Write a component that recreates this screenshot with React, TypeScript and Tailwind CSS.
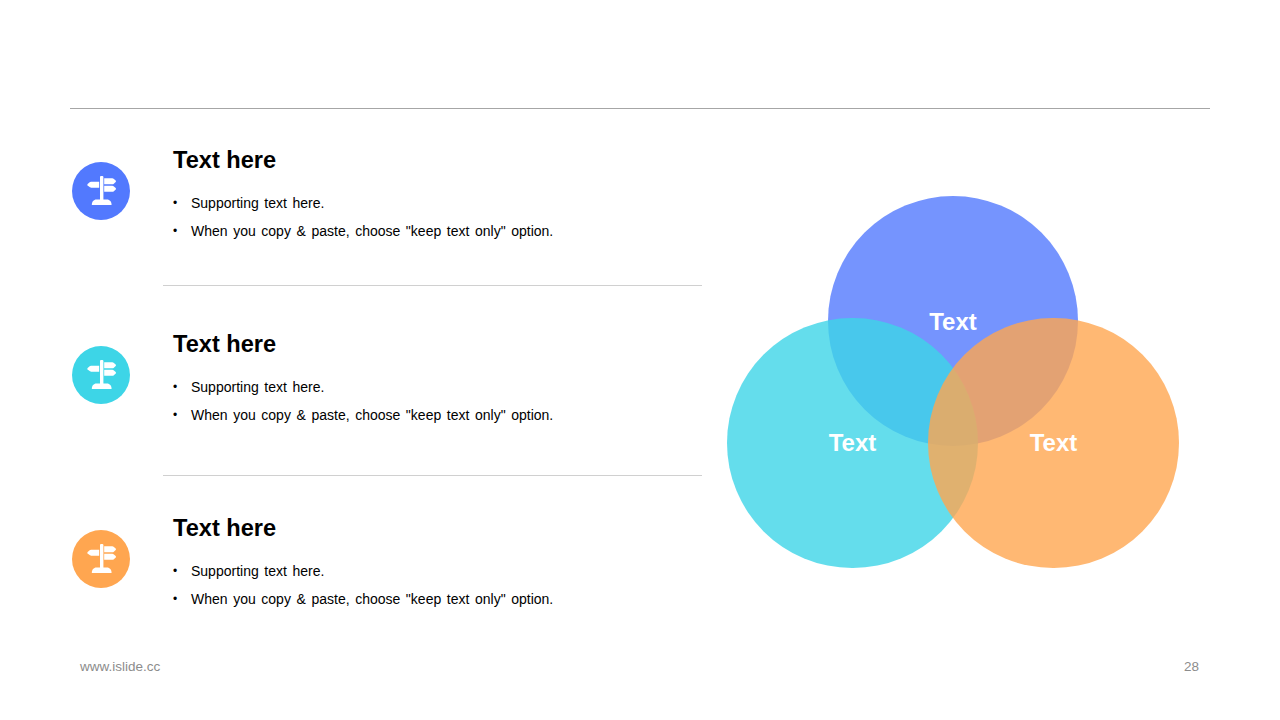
import React from "react";

function Sign() {
  return (
    <svg width="32" height="32" viewBox="0 0 32 32" fill="#ffffff" aria-hidden="true">
      <rect x="15" y="1" width="3.4" height="25" rx="1" />
      <path d="M14.2 6.7 H6.2 Q5.6 6.7 5 7.1 L2.6 9 Q2 9.7 2.6 10.4 L5 12.3 Q5.6 12.7 6.2 12.7 H14.2 Z" />
      <path d="M19.2 3.3 H27.4 Q28 3.3 28.6 3.7 L30.7 5.5 Q31.3 6.3 30.7 7.1 L28.6 8.9 Q28 9.3 27.4 9.3 H19.2 Z" />
      <path d="M19.2 10.8 H27.4 Q28 10.8 28.6 11.2 L30.7 13 Q31.3 13.8 30.7 14.6 L28.6 16.4 Q28 16.8 27.4 16.8 H19.2 Z" />
      <path d="M6.8 30 C6.8 27 8.6 24.6 11.5 24.6 H21.9 C24.8 24.6 26.6 27 26.6 30 Z" />
    </svg>
  );
}

function Row({ color, topClass }: { color: string; topClass: string }) {
  return (
    <div className={`flex items-start ${topClass}`}>
      <div className={`mt-[16px] ml-[2px] flex h-[58px] w-[58px] shrink-0 items-center justify-center rounded-full ${color}`}>
        <Sign />
      </div>
      <div className="ml-[43px]">
        <h2 className="text-[23.6px] leading-[28px] font-bold text-black">Text here</h2>
        <ul className="mt-[15px] text-[14px] leading-[28px] text-black [word-spacing:1.7px]">
          <li className="flex"><span className="w-[18px] text-[12px]">•</span>Supporting text here.</li>
          <li className="flex"><span className="w-[18px] text-[12px]">•</span>When you copy &amp; paste, choose "keep text only" option.</li>
        </ul>
      </div>
    </div>
  );
}

function Circle({ cls, label }: { cls: string; label: string }) {
  return (
    <div className={`absolute flex items-center justify-center rounded-full pt-[1px] ${cls}`}>
      <span className="text-[24px] font-bold text-white">{label}</span>
    </div>
  );
}

export default function App() {
  return (
    <div className="flex h-[720px] w-[1280px] flex-col bg-white px-[70px] pt-[108px] font-['Liberation_Sans',Arial,sans-serif]">
      <div className="h-px w-full bg-[#a6a6a6]" />
      <div className="flex flex-1">
        <div className="w-[632px]">
          <Row color="bg-[#5279fe]" topClass="mt-[37px]" />
          <div className="mt-[40px] ml-[93px] h-px w-[539px] bg-[#d0d0d0]" />
          <Row color="bg-[#3dd5e7]" topClass="mt-[44px]" />
          <div className="mt-[46px] ml-[93px] h-px w-[539px] bg-[#d0d0d0]" />
          <Row color="bg-[#ffa650]" topClass="mt-[38px]" />
        </div>
        <div className="relative flex-1">
          <Circle cls="left-[126px] top-[87px] h-[250px] w-[250px] bg-[#5279fe]/80" label="" />
          <Circle cls="left-[25px] top-[208.5px] h-[250.5px] w-[251px] bg-[#3dd5e7]/80" label="Text" />
          <Circle cls="left-[226px] top-[208.5px] h-[250.5px] w-[251px] bg-[#ffa650]/80" label="Text" />
          <div className="absolute left-[126px] top-[87px] flex h-[250px] w-[250px] items-center justify-center pt-[1px]">
            <span className="text-[24px] font-bold text-white">Text</span>
          </div>
        </div>
      </div>
      <div className="mb-[39px] flex h-[28px] items-center justify-between pl-[10px] pr-[11px] text-[13.5px] text-[#8c8c8c]">
        <span>www.islide.cc</span>
        <span>28</span>
      </div>
    </div>
  );
}
